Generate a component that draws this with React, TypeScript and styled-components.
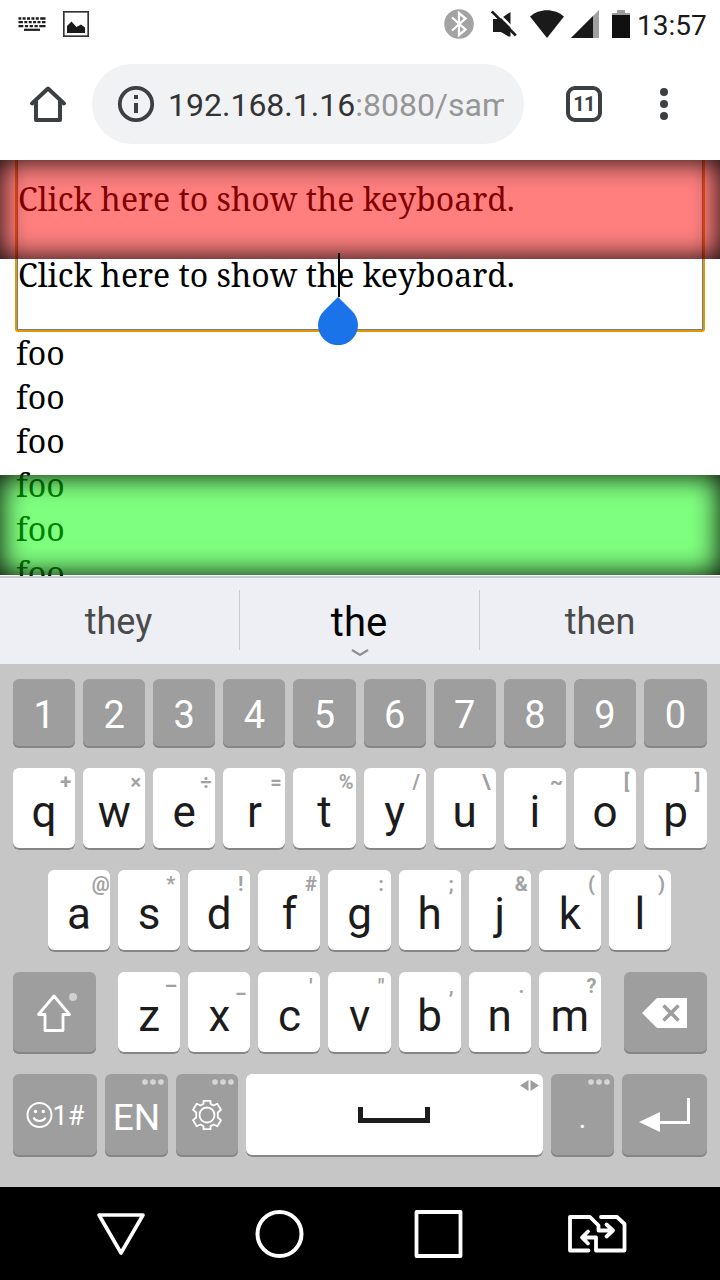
import React from "react";
import styled, { createGlobalStyle } from "styled-components";

const GlobalStyle = createGlobalStyle`
  * { box-sizing: border-box; }
  body { margin: 0; background: #fff; }
  svg { display: block; flex: none; }
`;

const Screen = styled.div`
  width: 720px;
  height: 1280px;
  display: flex;
  flex-direction: column;
  overflow: hidden;
  background: #fff;
  font-family: Roboto, sans-serif;
`;

/* ---------- status bar ---------- */

const StatusBar = styled.header`
  height: 48px;
  flex: none;
  display: flex;
  justify-content: space-between;
  padding: 0 12px 0 18px;
`;

const StatusGroup = styled.div`
  display: flex;
  align-items: center;
  height: 48px;
`;

const Clock = styled.span`
  width: 71px;
  margin-left: 7px;
  font-size: 28px;
  line-height: 48px;
  padding-top: 3px;
  color: #1a1a1a;
  white-space: nowrap;
`;

const Gap = styled.span<{ $w: number }>`
  width: ${(p) => p.$w}px;
`;

/* ---------- browser toolbar ---------- */

const Toolbar = styled.div`
  height: 112px;
  flex: none;
  display: flex;
  align-items: center;
  padding: 0 32px 0 28px;
`;

const Omnibox = styled.div`
  width: 432px;
  flex: none;
  height: 80px;
  margin: 0 42px 0 24px;
  padding: 0 20px 0 24px;
  border-radius: 40px;
  background: #f1f2f4;
  display: flex;
  align-items: center;
`;

const Url = styled.div`
  flex: 1;
  min-width: 0;
  margin-left: 12px;
  padding-top: 2px;
  overflow: hidden;
  white-space: nowrap;
  font-size: 32px;
  line-height: 80px;
  color: #333;
  span { color: #969696; }
`;

const TabCount = styled.div`
  width: 36px;
  height: 36px;
  flex: none;
  margin-right: 58px;
  border: 4px solid #3c4043;
  border-radius: 9px;
  font-size: 20px;
  font-weight: 700;
  line-height: 29px;
  letter-spacing: -0.8px;
  text-align: center;
  color: #3c4043;
`;

/* ---------- web page ---------- */

const Page = styled.main`
  position: relative;
  height: 416px;
  flex: none;
  overflow: hidden;
  padding: 0 17px 0 16px;
  font-family: "Noto Serif", "Droid Serif", "DejaVu Serif Condensed", "DejaVu Serif", serif;
  font-size: 32px;
  line-height: 44px;
  color: #000;
`;

const Editor = styled.div`
  height: 170px;
  margin: 0 0 1px 1px;
  padding-top: 17px;
  border: 1px solid #6f7f92;
  border-top: none;
  outline: 2px solid #e59700;
  border-radius: 1px;
`;

const Line = styled.p`
  margin: 0;
  white-space: nowrap;
`;

const Paragraph = styled(Line)`
  margin-bottom: 32px;
`;

const FixedBar = styled.div<{ $top: number; $height: number; $color: string }>`
  position: absolute;
  left: 0;
  top: ${(p) => p.$top}px;
  width: 720px;
  height: ${(p) => p.$height}px;
  background: ${(p) => p.$color};
  box-shadow: inset 0 0 28px #000;
`;

const Caret = styled.div`
  position: absolute;
  left: 338px;
  top: 93px;
  width: 2px;
  height: 44px;
  background: #000;
`;

const Handle = styled.svg`
  position: absolute;
  left: 318px;
  top: 137px;
`;

/* ---------- suggestions ---------- */

const Suggestions = styled.div`
  height: 88px;
  flex: none;
  display: grid;
  grid-template-columns: 239px 1px 239px 1px 240px;
  border-top: 2px solid #c8cace;
  background: #eeeff4;
`;

const Suggestion = styled.div<{ $active?: boolean }>`
  position: relative;
  padding-right: ${(p) => (p.$active ? 1 : 2)}px;
  text-align: center;
  font-size: ${(p) => (p.$active ? 40 : 36)}px;
  line-height: ${(p) => (p.$active ? 89 : 88)}px;
  color: ${(p) => (p.$active ? "#000" : "#4a4a4a")};
  &:last-child { padding-right: 0; }
`;

const Divider = styled.span`
  height: 60px;
  margin-top: 12px;
  background: #c9cbd0;
`;

const Chevron = styled.svg`
  position: absolute;
  left: 111px;
  top: 70px;
`;

/* ---------- keyboard ---------- */

const Keyboard = styled.section`
  height: 523px;
  flex: none;
  padding: 15px 13px 0;
  display: flex;
  flex-direction: column;
  gap: 20px;
  background: #c6c6c6;
`;

const KeyGroup = styled.div`
  width: 483.7px;
  margin: 0 auto;
  display: flex;
  gap: 8px;
`;

const Key = styled.div<{ $dark?: boolean; $w?: number }>`
  position: relative;
  flex: 0 0 ${(p) => p.$w ?? 62.11}px;
  display: flex;
  justify-content: center;
  border-radius: 6px;
  background: ${(p) => (p.$dark ? "#9e9e9e" : "#fff")};
  box-shadow: inset 0 -2px 0 #868686;
  color: ${(p) => (p.$dark ? "#fff" : "#1c1c1c")};
`;

const Row = styled.div<{ $h: number; $inset?: number; $fill?: boolean }>`
  display: flex;
  gap: 8px;
  height: ${(p) => p.$h}px;
  padding: 0 ${(p) => p.$inset ?? 0}px;
  > ${Key}:last-child { flex-grow: ${(p) => (p.$fill ? 1 : 0)}; }
`;

const Label = styled.span<{ $size: number; $lh: number }>`
  font-size: ${(p) => p.$size}px;
  line-height: ${(p) => p.$lh}px;
  height: 0;
  white-space: nowrap;
`;

const Hint = styled.span`
  position: absolute;
  right: 0;
  top: 0;
  width: 19px;
  display: flex;
  justify-content: center;
  font-size: 20px;
  font-weight: 700;
  line-height: 28px;
  color: #a2a2a2;
`;

const Corner = styled.svg`
  position: absolute;
  right: 4px;
  top: 4px;
`;

const Glyph = styled.svg<{ $top: number }>`
  margin-top: ${(p) => p.$top}px;
`;

/* ---------- navigation bar ---------- */

const NavBar = styled.nav`
  height: 93px;
  flex: none;
  display: flex;
  align-items: center;
  padding-left: 96px;
  background: #000;
`;

const DIGITS = "1234567890".split("");
const TOP: [string, string][] = [
  ["q", "+"], ["w", "×"], ["e", "÷"], ["r", "="], ["t", "%"],
  ["y", "/"], ["u", "\\"], ["i", "~"], ["o", "["], ["p", "]"],
];
const HOME: [string, string][] = [
  ["a", "@"], ["s", "*"], ["d", "!"], ["f", "#"], ["g", ":"],
  ["h", ";"], ["j", "&"], ["k", "("], ["l", ")"],
];
const BOTTOM: [string, string][] = [
  ["z", "–"], ["x", "_"], ["c", "'"], ["v", '"'], ["b", ","], ["n", "."], ["m", "?"],
];

const LetterKeys = ({ keys }: { keys: [string, string][] }) => (
  <>
    {keys.map(([letter, hint]) => (
      <Key key={letter}>
        <Label $size={44} $lh={88}>{letter}</Label>
        <Hint>{hint}</Hint>
      </Key>
    ))}
  </>
);

const MoreDots = () => (
  <Corner width="22" height="8" viewBox="0 0 22 8" fill="#d6d6d6">
    <circle cx="3" cy="4" r="2.8" />
    <circle cx="11" cy="4" r="2.8" />
    <circle cx="19" cy="4" r="2.8" />
  </Corner>
);

const KeyboardIcon = () => (
  <svg width="28" height="14" viewBox="0 0 28 14" stroke="#1c1c1c" fill="none">
    <path d="M0.5 1.5H27.5" strokeWidth="2.4" strokeDasharray="2.8 1.3 3 1.4 3 1.4 3 1.4 3 1.4 6" />
    <path d="M0.5 5.2H27.5" strokeWidth="2.2" strokeDasharray="4.4 1.4 3 1.4 3 1.4 3 1.4 3 1.4 5" />
    <path d="M0.5 9.2H27.5" strokeWidth="2.2" strokeDasharray="4.8 1.6 3.2 1.6 3.2 1.6 3.2 1.6 6.2" />
    <path d="M6 12.8H22" strokeWidth="2.2" />
  </svg>
);

const PictureIcon = () => (
  <svg width="26" height="26" viewBox="0 0 26 26">
    <rect x="0.8" y="0.8" width="24.4" height="24.4" fill="none" stroke="#333" strokeWidth="1.7" />
    <path d="M4 22V15L8.500 10.500L13.500 16L18 13.500L22 16.500V22Z" fill="#1a1a1a" />
  </svg>
);

const BluetoothIcon = () => (
  <svg width="30" height="30" viewBox="0 0 30 30">
    <circle cx="15" cy="15" r="14.800" fill="#a3a3a3" />
    <path d="M8 8.500L21.500 20.500L15 26V4L21.500 9.500L8 21.500" fill="none" stroke="#fff" strokeWidth="2.300" />
  </svg>
);

const MuteIcon = () => (
  <svg width="26" height="28" viewBox="0 0 26 28">
    <path d="M2 9H9L19.500 2V26.500H17.500L10 22H2Z" fill="#1a1a1a" />
    <path d="M3 -0.500L26.500 22.700" stroke="#fff" strokeWidth="2.400" />
    <path d="M0.800 1.500L24.800 25.500" stroke="#1a1a1a" strokeWidth="2.600" />
  </svg>
);

const WifiIcon = () => (
  <svg width="34" height="28" viewBox="0 0 34 28">
    <path d="M0 6.500C9 -2 25 -2 34 6.500L17 28Z" fill="#1a1a1a" />
  </svg>
);

const SignalIcon = () => (
  <svg width="28" height="28" viewBox="0 0 28 28">
    <path d="M0 28L28 0V28Z" fill="#a0a0a0" />
    <path d="M0 28L22 6V28Z" fill="#1a1a1a" />
  </svg>
);

const BatteryIcon = () => (
  <svg width="18" height="28" viewBox="0 0 18 28">
    <path d="M5 0H13V3H18V6H0V3H5Z" fill="#9c9c9c" />
    <path d="M0 5H18V28H0Z" fill="#101010" />
  </svg>
);

const SmileyIcon = () => (
  <Glyph $top={28} width="27" height="27" viewBox="0 0 27 27" fill="none" stroke="#fff" strokeWidth="2">
    <circle cx="13.500" cy="13" r="12" />
    <path d="M7.500 15.500C9.500 20 17.500 20 19.500 15.500" />
    <circle cx="9.500" cy="9.500" r="1.700" fill="#fff" stroke="none" />
    <circle cx="17.300" cy="9.500" r="1.700" fill="#fff" stroke="none" />
  </Glyph>
);

const GearIcon = () => (
  <Glyph $top={25} width="32" height="32" viewBox="0 0 32 32" fill="none" stroke="#fff" strokeWidth="1.800" strokeLinejoin="round">
    <circle cx="16" cy="16" r="7.500" />
    <path d="M12.500 1.800H19.500V4.800L22.500 6.500L26.300 4.800L30 10.800L26.800 13.500V18.500L30 21.200L26.300 27.200L22.500 25.500L19.500 27.200V30.200H12.500V27.200L9.500 25.500L5.700 27.200L2 21.200L5.200 18.500V13.500L2 10.800L5.700 4.800L9.500 6.500L12.500 4.800Z" />
  </Glyph>
);

export default function App() {
  return (
    <Screen>
      <GlobalStyle />
      <StatusBar>
        <StatusGroup>
          <KeyboardIcon />
          <Gap $w={17} />
          <PictureIcon />
        </StatusGroup>
        <StatusGroup>
          <BluetoothIcon />
          <Gap $w={17} />
          <MuteIcon />
          <Gap $w={13} />
          <WifiIcon />
          <Gap $w={7} />
          <SignalIcon />
          <Gap $w={13} />
          <BatteryIcon />
          <Clock>13:57</Clock>
        </StatusGroup>
      </StatusBar>

      <Toolbar>
        <svg width="40" height="40" viewBox="0 0 40 40" fill="none" stroke="#3c4043" strokeWidth="4" strokeLinecap="round" strokeLinejoin="round">
          <path d="M8 17V36H32V17" />
          <path d="M4 19.500L20 4.500L36 19.500" />
        </svg>
        <Omnibox>
          <svg width="40" height="40" viewBox="0 0 40 40">
            <circle cx="20" cy="20" r="16.200" fill="none" stroke="#3c4043" strokeWidth="3.800" />
            <path d="M18 11H22V15H18ZM18 19H22V29H18Z" fill="#3c4043" />
          </svg>
          <Url>192.168.1.16<span>:8080/sam</span></Url>
        </Omnibox>
        <TabCount>11</TabCount>
        <svg width="8" height="32" viewBox="0 0 8 32" fill="#3c4043">
          <circle cx="4" cy="4" r="4" />
          <circle cx="4" cy="16" r="4" />
          <circle cx="4" cy="28" r="4" />
        </svg>
      </Toolbar>

      <Page>
        <Editor>
          <Paragraph>Click here to show the keyboard.</Paragraph>
          <Paragraph>Click here to show the keyboard.</Paragraph>
        </Editor>
        {Array.from({ length: 6 }, (_, i) => (
          <Line key={i}>foo</Line>
        ))}
        <FixedBar $top={0} $height={99} $color="rgba(255, 0, 0, 0.5)" />
        <FixedBar $top={315} $height={100} $color="rgba(0, 255, 0, 0.5)" />
        <Caret />
        <Handle width="40" height="48" viewBox="0 0 40 48" fill="#1a73e8">
          <path d="M20 0L34.100 14A20 20 0 1 1 5.900 14Z" />
        </Handle>
      </Page>

      <Suggestions>
        <Suggestion>they</Suggestion>
        <Divider />
        <Suggestion $active>
          the
          <Chevron width="18" height="10" viewBox="0 0 18 10" fill="none" stroke="#8e8e92" strokeWidth="2.200">
            <path d="M1 2L9 7L17 2" />
          </Chevron>
        </Suggestion>
        <Divider />
        <Suggestion>then</Suggestion>
      </Suggestions>

      <Keyboard>
        <Row $h={69} $fill>
          {DIGITS.map((d) => (
            <Key key={d} $dark>
              <Label $size={38} $lh={72}>{d}</Label>
            </Key>
          ))}
        </Row>
        <Row $h={82} $fill>
          <LetterKeys keys={TOP} />
        </Row>
        <Row $h={82} $inset={35}>
          <LetterKeys keys={HOME} />
        </Row>
        <Row $h={82}>
          <Key $dark $w={83}>
            <Glyph $top={20} width="45" height="42" viewBox="0 0 45 42" fill="none">
              <path d="M22 4L37.500 22.500H31V38.500H13V22.500H6.500Z" stroke="#fff" strokeWidth="2.800" strokeLinejoin="round" />
              <circle cx="41" cy="5" r="4" fill="#d0d0d0" />
            </Glyph>
          </Key>
          <KeyGroup>
            <LetterKeys keys={BOTTOM} />
          </KeyGroup>
          <Key $dark $w={83}>
            <Glyph $top={26} width="47" height="30" viewBox="0 0 47 30">
              <path d="M0 15L15 0H45V30H15Z" fill="#fff" />
              <path d="M21.500 7.500L36.500 22.500M36.500 7.500L21.500 22.500" stroke="#9e9e9e" strokeWidth="3.600" />
            </Glyph>
          </Key>
        </Row>
        <Row $h={83}>
          <Key $dark $w={84}>
            <SmileyIcon />
            <Label $size={27} $lh={84}>1#</Label>
          </Key>
          <Key $dark $w={63}>
            <Label $size={37} $lh={87}>EN</Label>
            <MoreDots />
          </Key>
          <Key $dark $w={62}>
            <GearIcon />
            <MoreDots />
          </Key>
          <Key $w={297}>
            <Glyph $top={33} width="73" height="16" viewBox="0 0 73 16">
              <path d="M2.500 0V13.500H69.500V0" fill="none" stroke="#1c1c1c" strokeWidth="5" />
            </Glyph>
            <Corner width="19" height="14" viewBox="0 0 19 14" fill="#9e9e9e">
              <path d="M0 7.500L8.500 2V13Z" />
              <path d="M19 7.500L10.500 2V13Z" />
            </Corner>
          </Key>
          <Key $dark $w={63}>
            <Label $size={30} $lh={87}>.</Label>
            <MoreDots />
          </Key>
          <Key $dark $w={85}>
            <Glyph $top={24} width="53" height="36" viewBox="0 0 53 36">
              <path d="M1 24L22 14V34Z" fill="#fff" />
              <path d="M21 24.500H50.500V0" fill="none" stroke="#fff" strokeWidth="3" />
            </Glyph>
          </Key>
        </Row>
      </Keyboard>

      <NavBar>
        <svg width="50" height="44" viewBox="0 0 50 44" fill="none" stroke="#fff" strokeWidth="3.600" strokeLinejoin="round">
          <path d="M3 3H47L25 41Z" />
        </svg>
        <Gap $w={109} />
        <svg width="50" height="50" viewBox="0 0 50 50" fill="none" stroke="#fff" strokeWidth="4">
          <circle cx="24.500" cy="25" r="22" />
        </svg>
        <Gap $w={109} />
        <svg width="50" height="50" viewBox="0 0 50 50" fill="none" stroke="#fff" strokeWidth="3.800" strokeLinejoin="round">
          <rect x="2.500" y="3" width="44" height="44" />
        </svg>
        <Gap $w={104} />
        <svg width="60" height="38" viewBox="0 0 60 38" fill="none" stroke="#fff" strokeWidth="3.800" strokeLinejoin="round" strokeLinecap="round">
          <path d="M20.500 35.500H2V2H22L30.500 10.500V15.500H45M38.500 9.500L45 15.500L38.500 21.500" />
          <path d="M33 2H49L56.500 9V35.500H28V22.500H15M20 16.500L14 22.500L20 28.500" />
        </svg>
      </NavBar>
    </Screen>
  );
}
